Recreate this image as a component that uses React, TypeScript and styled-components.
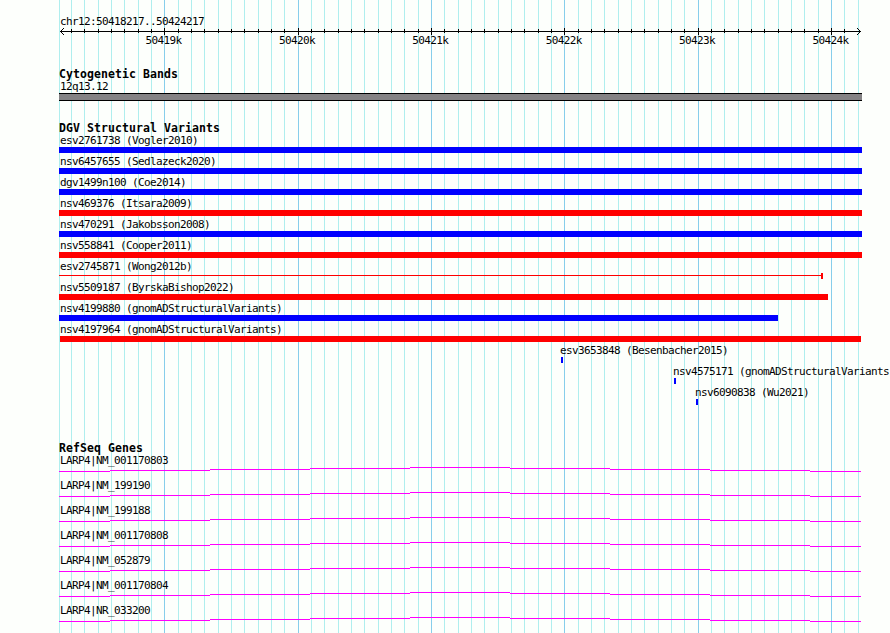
import React from "react";
import styled, { createGlobalStyle } from "styled-components";

const GlobalStyle = createGlobalStyle`
  html, body { margin: 0; background: #fdfffc; }
`;

const VIEW_LEFT = 59;
const VIEW_WIDTH = 803;

const Browser = styled.main`
  position: relative;
  width: 890px;
  height: 633px;
  overflow: hidden;
  box-sizing: border-box;
  padding: 15px 0 0 ${VIEW_LEFT}px;
  background: #fdfffc;
  color: #000;
  font: 11px/14px "DejaVu Sans Mono", monospace;
  letter-spacing: -0.622px;
  white-space: pre;
`;

const GridLayer = styled.svg`
  position: absolute;
  inset: 0;
  shape-rendering: crispEdges;
`;

const Content = styled.div`
  position: relative;
  display: flex;
  flex-direction: column;
`;

const Label = styled.div<{ $indent?: number }>`
  height: 13px;
  padding-left: ${({ $indent = 1 }) => $indent}px;
`;

const Heading = styled.h2`
  margin: 0;
  height: 12px;
  font-size: 11.5px;
  font-weight: bold;
  line-height: 12px;
  letter-spacing: 0.077px;
`;

const Ruler = styled.header`
  height: 53px;
`;

const Axis = styled.svg`
  display: block;
  height: 7px;
  shape-rendering: crispEdges;
`;

const AxisLabels = styled.div`
  display: flex;
  gap: 97.4px;
  height: 14px;
  margin-top: -1px;
  padding-left: 86.5px;
`;

const AxisLabel = styled.span`
  width: 36px;
`;

const Track = styled.section<{ $height: number }>`
  height: ${({ $height }) => $height}px;
`;

const Band = styled.div`
  box-sizing: border-box;
  width: ${VIEW_WIDTH}px;
  height: 8px;
  border: solid #000;
  border-width: 1px 0;
  background: #848284;
`;

const VariantRow = styled.div`
  height: 21px;
`;

const Bar = styled.div<{ $start: number; $end: number; $color: string }>`
  width: ${({ $start, $end }) => $end - $start}px;
  height: 6px;
  margin-left: ${({ $start }) => $start - VIEW_LEFT}px;
  background: ${({ $color }) => $color};
`;

const ThinSpan = styled.div<{ $end: number }>`
  display: flex;
  width: ${({ $end }) => $end - VIEW_LEFT}px;
  height: 6px;
`;

const Thread = styled.div`
  flex: 1;
  height: 1px;
  margin-top: 2px;
  background: #f00;
`;

const EndCap = styled.div`
  width: 2px;
  background: #f00;
`;

const GeneRow = styled.div`
  height: 25px;
`;

const Intron = styled.svg`
  display: block;
  shape-rendering: crispEdges;
`;

const ticks = Array.from({ length: 60 }, (_, i) => ({
  x: Math.round(71 + (i * 40) / 3),
  major: i % 10 === 7,
}));

const positions = ["50419k", "50420k", "50421k", "50422k", "50423k", "50424k"];

const GAIN = "#00f";
const LOSS = "#f00";

interface Variant {
  name: string;
  start: number;
  end: number;
  color: string;
  indent?: number;
  thin?: boolean;
}

const variants: Variant[] = [
  { name: "esv2761738 (Vogler2010)", start: 59, end: 862, color: GAIN },
  { name: "nsv6457655 (Sedlazeck2020)", start: 59, end: 862, color: GAIN },
  { name: "dgv1499n100 (Coe2014)", start: 59, end: 862, color: GAIN },
  { name: "nsv469376 (Itsara2009)", start: 59, end: 862, color: LOSS },
  { name: "nsv470291 (Jakobsson2008)", start: 59, end: 862, color: GAIN },
  { name: "nsv558841 (Cooper2011)", start: 59, end: 862, color: LOSS },
  { name: "esv2745871 (Wong2012b)", start: 59, end: 823, color: LOSS, thin: true },
  { name: "nsv5509187 (ByrskaBishop2022)", start: 59, end: 828, color: LOSS },
  { name: "nsv4199880 (gnomADStructuralVariants)", start: 59, end: 778, color: GAIN },
  { name: "nsv4197964 (gnomADStructuralVariants)", start: 60, end: 861, color: LOSS },
  { name: "esv3653848 (Besenbacher2015)", start: 561, end: 563, color: GAIN, indent: 501 },
  { name: "nsv4575171 (gnomADStructuralVariants)", start: 674, end: 676, color: GAIN, indent: 614 },
  { name: "nsv6090838 (Wu2021)", start: 696, end: 698, color: GAIN, indent: 636 },
];

const genes = [
  "LARP4|NM_001170803",
  "LARP4|NM_199190",
  "LARP4|NM_199188",
  "LARP4|NM_001170808",
  "LARP4|NM_052879",
  "LARP4|NM_001170804",
  "LARP4|NR_033200",
];

const intronSteps = [
  [0, 51, 4],
  [51, 151, 3],
  [151, 251, 2],
  [251, 351, 1],
  [351, 451, 0],
  [451, 551, 1],
  [551, 651, 2],
  [651, 751, 3],
  [751, 802, 4],
];

function Grid() {
  return (
    <GridLayer width="890" height="633">
      <rect x={VIEW_LEFT} y="0" width="1" height="633" fill="#afeeee" />
      {ticks.map(({ x, major }) => (
        <rect key={x} x={x} y="0" width="1" height="633" fill={major ? "#87ceeb" : "#afeeee"} />
      ))}
    </GridLayer>
  );
}

function RulerAxis() {
  return (
    <Axis width="803" height="7">
      <rect x="1" y="3" width="801" height="1" />
      {[1, 2, 3].map((d) => (
        <React.Fragment key={d}>
          <rect x={1 + d} y={3 - d} width="1" height="1" />
          <rect x={1 + d} y={3 + d} width="1" height="1" />
          <rect x={801 - d} y={3 - d} width="1" height="1" />
          <rect x={801 - d} y={3 + d} width="1" height="1" />
        </React.Fragment>
      ))}
      {ticks.slice(0, -1).map(({ x, major }) => (
        <rect key={x} x={x - VIEW_LEFT} y={major ? 0 : 1} width="1" height={major ? 7 : 4} />
      ))}
    </Axis>
  );
}

export default function App() {
  return (
    <>
      <GlobalStyle />
      <Browser>
        <Grid />
        <Content>
          <Ruler>
            <Label>chr12:50418217..50424217</Label>
            <RulerAxis />
            <AxisLabels>
              {positions.map((p) => (
                <AxisLabel key={p}>{p}</AxisLabel>
              ))}
            </AxisLabels>
          </Ruler>
          <Track $height={54}>
            <Heading>Cytogenetic Bands</Heading>
            <Label>12q13.12</Label>
            <Band />
          </Track>
          <Track $height={320}>
            <Heading>DGV Structural Variants</Heading>
            {variants.map(({ name, start, end, color, indent, thin }) => (
              <VariantRow key={name}>
                <Label $indent={indent}>{name}</Label>
                {thin ? (
                  <ThinSpan $end={end}>
                    <Thread />
                    <EndCap />
                  </ThinSpan>
                ) : (
                  <Bar $start={start} $end={end} $color={color} />
                )}
              </VariantRow>
            ))}
          </Track>
          <Track $height={190}>
            <Heading>RefSeq Genes</Heading>
            {genes.map((gene) => (
              <GeneRow key={gene}>
                <Label>{gene}</Label>
                <Intron width="802" height="5">
                  {intronSteps.map(([from, to, y]) => (
                    <rect key={from} x={from} y={y} width={to - from} height="1" fill="#f0f" />
                  ))}
                </Intron>
              </GeneRow>
            ))}
          </Track>
        </Content>
      </Browser>
    </>
  );
}
